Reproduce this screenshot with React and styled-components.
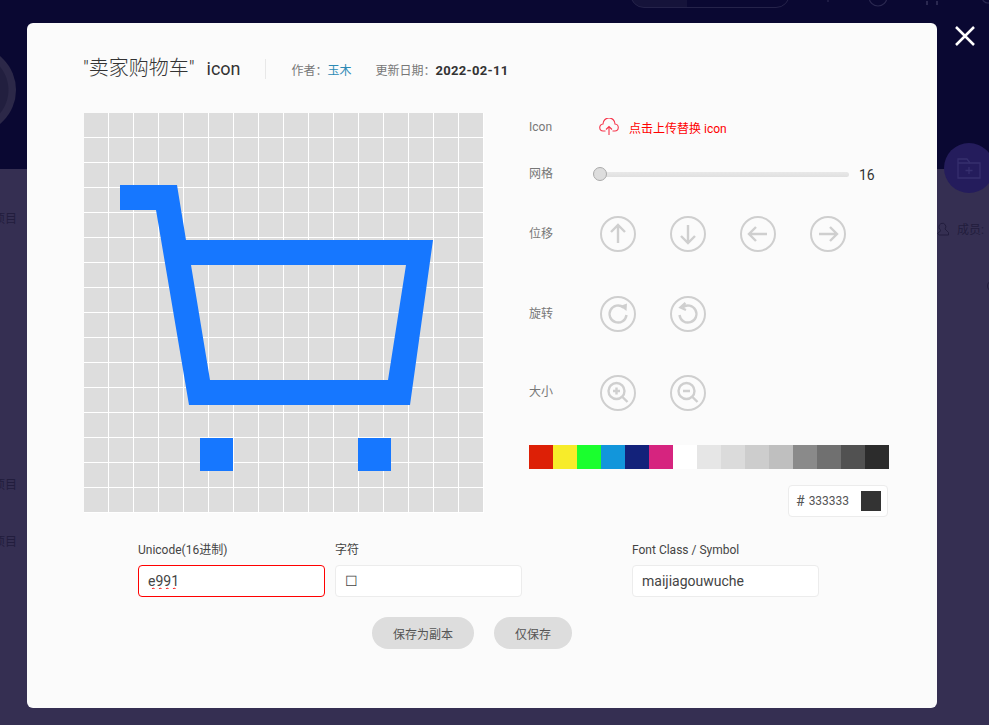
import React from 'react';
import styled, { createGlobalStyle } from 'styled-components';

const Global = createGlobalStyle`
  html, body {
    margin: 0;
    padding: 0;
    height: 100%;
    overflow: hidden;
  }
  body {
    font-family: Roboto, "Noto Sans CJK SC", sans-serif;
  }
`;

const Page = styled.div`
  position: relative;
  width: 989px;
  height: 725px;
  overflow: hidden;
  background: #352f52;
`;

const Banner = styled.div`
  height: 169px;
  background: #0a0832;
`;

const SearchPill = styled.div`
  position: absolute;
  left: 630px;
  top: -20px;
  width: 158px;
  height: 26px;
  border: 1px solid #25234a;
  border-radius: 14px;
  background: linear-gradient(to right, #15133a 56px, transparent 56px);
`;

const TopMarks = styled.svg`
  position: absolute;
  left: 820px;
  top: 0;
`;

const Avatar = styled.div`
  position: absolute;
  left: -72px;
  top: 46px;
  width: 88px;
  height: 88px;
  border-radius: 50%;
  background: radial-gradient(circle, #221f3f 0 36px, #2c2848 37px);
`;

const FolderBubble = styled.div`
  position: absolute;
  left: 944px;
  top: 143px;
  width: 50px;
  height: 50px;
  border-radius: 50%;
  background: #241c5c;
  display: flex;
  align-items: center;
  justify-content: center;
`;

const BackdropText = styled.span`
  position: absolute;
  left: ${p => p.$x}px;
  top: ${p => p.$y}px;
  font-size: 12px;
  line-height: 16px;
  color: #221d3d;
  white-space: nowrap;
`;

const Members = styled.svg`
  position: absolute;
  left: 936px;
  top: 222px;
`;

const EdgeRing = styled.i`
  position: absolute;
  left: 987px;
  top: 280px;
  width: 10px;
  height: 10px;
  border: 1px solid #221d3d;
  border-radius: 50%;
`;

const Close = styled.button`
  position: absolute;
  left: 953px;
  top: 24px;
  width: 24px;
  height: 24px;
  padding: 0;
  border: 0;
  background: none;
  display: flex;
`;

const Modal = styled.div`
  position: absolute;
  left: 27px;
  top: 23px;
  width: 910px;
  height: 685px;
  box-sizing: border-box;
  padding: 28px 48px 0 57px;
  background: #fbfbfb;
  border-radius: 6px;
`;

const Header = styled.div`
  display: flex;
  align-items: center;
  height: 36px;
`;

const Title = styled.h2`
  margin: 0 0 2px -1px;
  padding-right: 24px;
  font-size: 20px;
  line-height: 36px;
  font-weight: 300;
  color: #333;
  white-space: pre;
`;

const TitleWord = styled.span`
  margin-left: 12px;
  font-size: 18px;
  font-weight: 400;
`;

const Divider = styled.i`
  width: 1px;
  height: 20px;
  background: #e8e8e8;
  margin-right: 26px;
`;

const Meta = styled.span`
  margin-right: 24px;
  font-size: 12px;
  color: #777;
`;

const Author = styled.a`
  color: #2d8ab5;
`;

const DateText = styled.b`
  color: #333;
  font-size: 13px;
  font-weight: 700;
  letter-spacing: .3px;
`;

const Body = styled.div`
  display: flex;
  margin-top: 26px;
`;

const Board = styled.div`
  position: relative;
  width: 400px;
  height: 400px;
  flex: none;
  background-color: #ddd;
  background-image:
    linear-gradient(to right, #fff 1px, transparent 1px),
    linear-gradient(to bottom, #fff 1px, transparent 1px);
  background-size: 25px 25px;
  background-position: -1px -1px;
`;

const BoardIcon = styled.svg`
  display: block;
  width: 400px;
  height: 400px;
`;

const Side = styled.div`
  margin-left: 45px;
  width: 360px;
`;

const Row = styled.div`
  display: flex;
  align-items: center;
  height: ${p => p.$h}px;
  margin-bottom: ${p => p.$mb || 0}px;
`;

const RowLabel = styled.span`
  width: 71px;
  flex: none;
  margin-bottom: ${p => p.$lift || 0}px;
  font-size: 12px;
  color: #777;
`;

const Upload = styled.div`
  display: flex;
  align-items: center;
  gap: 10px;
  margin-left: -1px;
  font-size: 12px;
  color: #f00;
`;

const Track = styled.div`
  position: relative;
  width: 249px;
  height: 5px;
  margin-top: 3px;
  border-radius: 3px;
  background: linear-gradient(#e8e8e8, #e0e0e0);
`;

const Knob = styled.span`
  position: absolute;
  left: -7px;
  top: -5px;
  width: 14px;
  height: 14px;
  box-sizing: border-box;
  border-radius: 50%;
  border: 1px solid #aaa;
  background: #ddd;
`;

const SliderValue = styled.span`
  margin: 3px 0 0 10px;
  font-size: 14px;
  color: #333;
`;

const RoundButtons = styled.div`
  display: flex;
  gap: 34px;
`;

const RoundButton = styled.button`
  width: 36px;
  height: 36px;
  padding: 0;
  border: 0;
  background: none;
  display: block;
`;

const Palette = styled.div`
  display: flex;
`;

const Swatch = styled.span`
  width: 24px;
  height: 24px;
  background: ${p => p.$color};
`;

const HexWrap = styled.div`
  display: flex;
  justify-content: flex-end;
  margin: 16px 1px 0 0;
`;

const HexBox = styled.div`
  display: flex;
  align-items: center;
  width: 100px;
  height: 32px;
  box-sizing: border-box;
  padding: 0 6px 0 7px;
  background: #fff;
  border: 1px solid #ececec;
  border-radius: 4px;
  font-size: 12px;
  color: #555;
`;

const Hash = styled.span`
  font-size: 14px;
  margin-right: 4px;
`;

const HexChip = styled.span`
  margin-left: auto;
  width: 20px;
  height: 20px;
  background: #333;
`;

const Fields = styled.div`
  display: flex;
  margin: 25px 0 0 54px;
`;

const Field = styled.label`
  display: block;
  width: 187px;
  margin-right: ${p => p.$mr}px;
`;

const FieldLabel = styled.div`
  font-size: 12px;
  line-height: 16px;
  height: 23px;
  color: #444;
`;

const Input = styled.input`
  display: block;
  width: 100%;
  height: 32px;
  box-sizing: border-box;
  padding: 0 9px;
  border: 1px solid ${p => (p.$error ? '#f00' : '#ececec')};
  border-radius: 4px;
  background: #fff;
  outline: 0;
  font-family: inherit;
  font-size: 14px;
  color: #444;
  text-decoration: ${p => (p.$error ? 'underline wavy #f00 1px' : 'none')};
  text-decoration-skip-ink: none;
  text-underline-offset: 1px;
`;

const Actions = styled.div`
  display: flex;
  gap: 20px;
  margin: 20px 0 0 288px;
`;

const Pill = styled.button`
  height: 32px;
  padding: 0 21px;
  border: 0;
  border-radius: 16px;
  background: #ddd;
  font-family: inherit;
  font-size: 12px;
  color: #555;
`;

const cartPath =
  'M36 72H93L102 127H349L326 292H105L72 97H36ZM107 152L126 267H304L322 152ZM116 325H149V358H116ZM274 325H307V358H274Z';

const Round = ({ children }) => (
  <RoundButton type="button">
    <svg width="36" height="36" viewBox="0 0 36 36" fill="none" stroke="#cfcfcf" strokeWidth="2.4">
      <circle cx="18" cy="18" r="17" strokeWidth="2" />
      {children}
    </svg>
  </RoundButton>
);

const swatches = [
  '#dd2006', '#f7ec2a', '#1aff2e', '#1296db', '#13227a', '#d6247f', '#ffffff', '#e6e6e6',
  '#dbdbdb', '#cdcdcd', '#bfbfbf', '#8a8a8a', '#707070', '#515151', '#2c2c2c',
];

export default () => (
  <Page>
    <Global />
    <Banner />
    <SearchPill />
    <TopMarks width="169" height="12" fill="none" stroke="#2a2850" strokeWidth="1.2">
      <path d="M8 0V2" />
      <circle cx="58" cy="-3" r="9" />
      <path d="M107 1V5M117 1V5" strokeWidth="2" />
      <circle cx="168" cy="-3" r="6" />
    </TopMarks>
    <Avatar />
    <FolderBubble>
      <svg width="26" height="24" viewBox="0 0 26 24" fill="none" stroke="#362f6e" strokeWidth="1.3">
        <path d="M2 22V3H11L14 7H24V22Z" />
        <path d="M2 7H14M13 11V18M9.5 14.5H16.5" />
      </svg>
    </FolderBubble>
    <BackdropText $x={-7} $y={211}>项目</BackdropText>
    <BackdropText $x={-7} $y={477}>项目</BackdropText>
    <BackdropText $x={-7} $y={534}>项目</BackdropText>
    <Members width="14" height="16" viewBox="0 0 14 16" fill="none" stroke="#221d3d" strokeWidth="1">
      <path d="M5 1.5A3.5 3.5 0 0 1 9 7L12.5 10.5V13H3.5L1.5 11.5L5 8.5A4 4 0 0 1 5 1.5Z" />
    </Members>
    <BackdropText $x={957} $y={222}>成员:</BackdropText>
    <EdgeRing />
    <Close type="button">
      <svg width="24" height="24" viewBox="0 0 24 24" stroke="#fff" strokeWidth="2.5">
        <path d="M3 3L21 21M21 3L3 21" />
      </svg>
    </Close>
    <Modal>
      <Header>
        <Title>"卖家购物车"<TitleWord>icon</TitleWord></Title>
        <Divider />
        <Meta>作者：<Author>玉木</Author></Meta>
        <Meta>更新日期：<DateText>2022-02-11</DateText></Meta>
      </Header>
      <Body>
        <Board>
          <BoardIcon viewBox="0 0 400 400">
            <path d={cartPath} fill="#1677ff" fillRule="evenodd" />
          </BoardIcon>
        </Board>
        <Side>
          <Row $h={28} $mb={18}>
            <RowLabel>Icon</RowLabel>
            <Upload>
              <svg width="20" height="18" viewBox="0 0 20 18" fill="none" stroke="#f6364c" strokeWidth="1.1">
                <path d="M6.5 13H4.5A3.5 3.5 0 0 1 4 6 6 6 0 0 1 16 6 3.5 3.5 0 0 1 15.5 13H13.5" />
                <path d="M10 17V9M7 11.5L10 8.5L13 11.5" />
              </svg>
              <span>点击上传替换 icon</span>
            </Upload>
          </Row>
          <Row $h={28} $mb={29}>
            <RowLabel $lift={2}>网格</RowLabel>
            <Track><Knob /></Track>
            <SliderValue>16</SliderValue>
          </Row>
          <Row $h={36} $mb={44}>
            <RowLabel $lift={4}>位移</RowLabel>
            <RoundButtons>
              <Round><path d="M18 27V10M11 16L18 9L25 16" /></Round>
              <Round><path d="M18 9V26M11 20L18 27L25 20" /></Round>
              <Round><path d="M27 18H10M16 11L9 18L16 25" /></Round>
              <Round><path d="M9 18H26M20 11L27 18L20 25" /></Round>
            </RoundButtons>
          </Row>
          <Row $h={36} $mb={43}>
            <RowLabel $lift={4}>旋转</RowLabel>
            <RoundButtons>
              <Round>
                <path d="M23.5 11.5A8.5 8.5 0 1 0 26.5 19" />
                <path d="M20 10L27 7.5L26.5 15Z" fill="#cfcfcf" stroke="none" />
              </Round>
              <Round>
                <path d="M12.5 11.5A8.5 8.5 0 1 1 9.5 19" />
                <path d="M15.5 7L10.5 11.5L16 14" />
              </Round>
            </RoundButtons>
          </Row>
          <Row $h={36} $mb={34}>
            <RowLabel $lift={5}>大小</RowLabel>
            <RoundButtons>
              <Round>
                <circle cx="16.5" cy="16" r="8" />
                <path d="M22.5 22L27.5 27M13 16H20M16.5 12.5V19.5" />
              </Round>
              <Round>
                <circle cx="16.5" cy="16" r="8" />
                <path d="M22.5 22L27.5 27M13 16H20" />
              </Round>
            </RoundButtons>
          </Row>
          <Palette>
            {swatches.map(color => <Swatch key={color} $color={color} />)}
          </Palette>
          <HexWrap>
            <HexBox>
              <Hash>#</Hash>
              333333
              <HexChip />
            </HexBox>
          </HexWrap>
        </Side>
      </Body>
      <Fields>
        <Field $mr={10}>
          <FieldLabel>Unicode(16进制)</FieldLabel>
          <Input $error defaultValue="e991" />
        </Field>
        <Field $mr={110}>
          <FieldLabel>字符</FieldLabel>
          <Input defaultValue="☐" />
        </Field>
        <Field $mr={0}>
          <FieldLabel>Font Class / Symbol</FieldLabel>
          <Input defaultValue="maijiagouwuche" />
        </Field>
      </Fields>
      <Actions>
        <Pill type="button">保存为副本</Pill>
        <Pill type="button">仅保存</Pill>
      </Actions>
    </Modal>
  </Page>
);
